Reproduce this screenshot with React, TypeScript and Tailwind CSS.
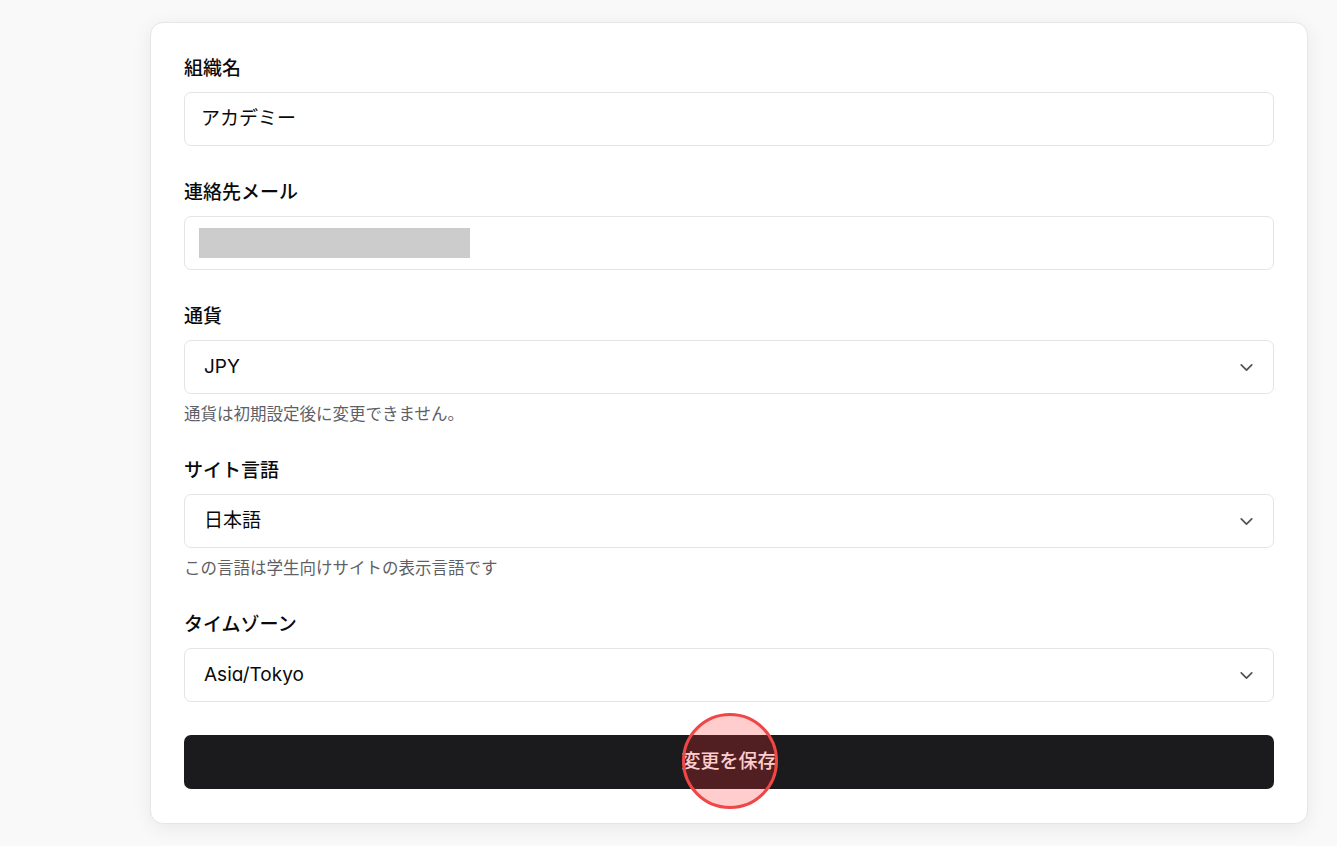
import { ChevronDown } from 'lucide-react';

const Label = ({ children }: { children: React.ReactNode }) => (
  <label className="block text-[19px] leading-[24px] font-medium text-[#0a0a0a] mb-[11px]">
    {children}
  </label>
);

const SelectBox = ({ value }: { value: string }) => (
  <div className="h-[54px] rounded-[7px] border border-[#e4e4e7] bg-white flex items-center justify-between pl-[19px] pr-[16px]">
    <span className="text-[19px] text-[#0a0a0a]">{value}</span>
    <ChevronDown size={21} strokeWidth={2} className="text-[#52525b]" />
  </div>
);

const Hint = ({ children }: { children: React.ReactNode }) => (
  <p className="mt-[10px] text-[16.5px] leading-[20px] text-[#5f5f66]">{children}</p>
);

export default function App() {
  return (
    <div className="min-h-screen bg-[#f9f9f9] pl-[150px] pr-[29px] pt-[22px] font-['Inter','Noto_Sans_CJK_JP',sans-serif] [font-feature-settings:'cv11']">
      <div className="rounded-[13px] border border-[#e6e6e6] bg-white shadow-[0_4px_20px_rgba(0,0,0,0.07)] px-[33px] pt-[34px] pb-[34px] flex flex-col gap-[35px]">
        {/* Organization name */}
        <div>
          <Label>組織名</Label>
          <div className="h-[54px] rounded-[7px] border border-[#e4e4e7] bg-white flex items-center px-[16px]">
            <span className="text-[19px] text-[#0a0a0a]">アカデミー</span>
          </div>
        </div>

        {/* Contact email (redacted) */}
        <div>
          <Label>連絡先メール</Label>
          <div className="h-[54px] rounded-[7px] border border-[#e4e4e7] bg-white flex items-center px-[14px]">
            <div className="w-[271px] h-[30px] bg-[#cccccc]" />
          </div>
        </div>

        {/* Currency */}
        <div>
          <Label>通貨</Label>
          <SelectBox value="JPY" />
          <Hint>通貨は初期設定後に変更できません。</Hint>
        </div>

        {/* Site language */}
        <div>
          <Label>サイト言語</Label>
          <SelectBox value="日本語" />
          <Hint>この言語は学生向けサイトの表示言語です</Hint>
        </div>

        {/* Timezone */}
        <div>
          <Label>タイムゾーン</Label>
          <SelectBox value="Asia/Tokyo" />
        </div>

        <button className="relative -mt-[2px] h-[54px] rounded-[7px] bg-[#1b1b1d] text-white text-[19px] font-medium flex items-center justify-center">
          変更を保存
          {/* click marker */}
          <span className="absolute left-1/2 top-1/2 w-[96px] h-[96px] -translate-x-1/2 -translate-y-1/2 ml-[1px] -mt-[1px] rounded-full border-[3px] border-[#f04646] bg-[rgba(255,45,45,0.24)]" />
        </button>
      </div>
    </div>
  );
}
